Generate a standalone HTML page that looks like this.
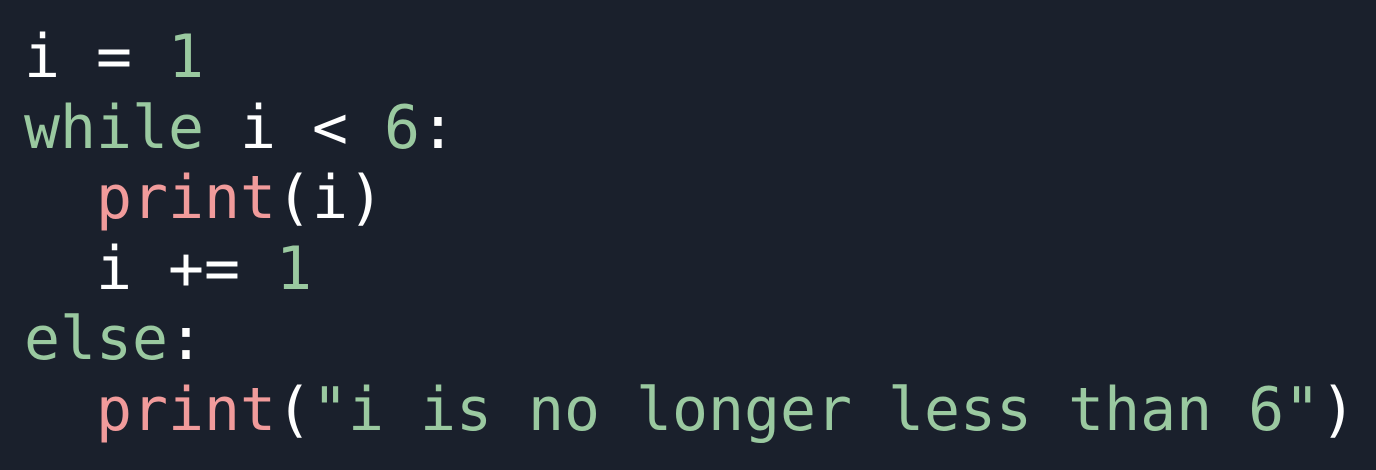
<!DOCTYPE html>
<html><head><meta charset="utf-8"><style>
html,body{margin:0;padding:0;background:#1a202c;width:1376px;height:470px;overflow:hidden}
pre{margin:0;padding:22px 0 0 24px;font-family:"DejaVu Sans Mono","Liberation Mono",monospace;font-size:59.8px;line-height:70.5px;color:#ffffff}
.g{color:#9ac9a0}.p{color:#f19b9b}
</style></head><body><pre>i = <span class="g">1</span>
<span class="g">while</span> i &lt; <span class="g">6</span>:
  <span class="p">print</span>(i)
  i += <span class="g">1</span>
<span class="g">else</span>:
  <span class="p">print</span>(<span class="g">"i is no longer less than 6"</span>)</pre></body></html>
